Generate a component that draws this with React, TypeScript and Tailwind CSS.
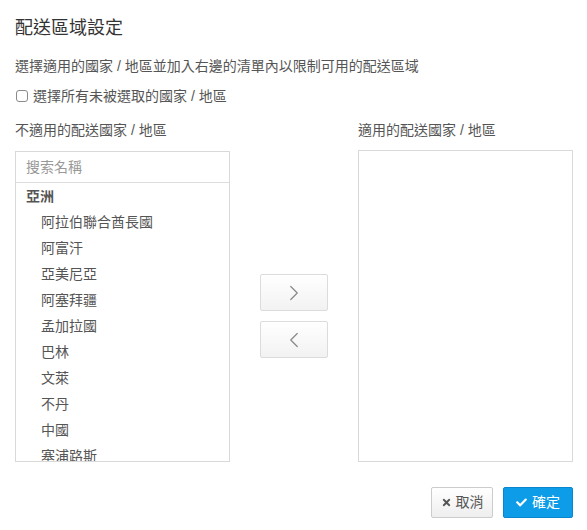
import React from "react";
import { ChevronRight, ChevronLeft } from "lucide-react";
import { FaCheck, FaTimes } from "react-icons/fa";

const items = [
  "阿拉伯聯合酋長國",
  "阿富汗",
  "亞美尼亞",
  "阿塞拜疆",
  "孟加拉國",
  "巴林",
  "文萊",
  "不丹",
  "中國",
  "塞浦路斯",
];

export default function App() {
  return (
    <div
      className="w-[587px] h-[530px] bg-white text-[#555] overflow-hidden"
      style={{ fontFamily: '"Helvetica Neue", "Liberation Sans", "Noto Sans CJK TC", sans-serif' }}
    >
      <div className="pl-[15px] pr-[14px] pt-[16px]">
        <h1 className="text-[18px] leading-[24px] text-[#333] font-normal">配送區域設定</h1>
        <p className="mt-[16px] text-[14px] leading-[20px] text-[#555]">
          選擇適用的國家 / 地區並加入右邊的清單內以限制可用的配送區域
        </p>
        <label className="mt-[10px] flex items-center h-[20px] text-[14px] leading-[20px] text-[#555]">
          <span className="w-[12px] h-[12px] border border-[#8a8a8a] rounded-[3px] bg-white mr-[5px] ml-[1px] box-border" />
          選擇所有未被選取的國家 / 地區
        </label>

        <div className="mt-[14px] flex">
          <div className="w-[215px] flex flex-col">
            <div className="text-[14px] leading-[20px] h-[20px] text-[#555]">不適用的配送國家 / 地區</div>
            <div className="mt-[11px] h-[311px] border border-[#d9d9d9] flex flex-col overflow-hidden">
              <div className="h-[31px] border-b border-[#ddd] flex items-center pl-[10px] text-[14px] text-[#999] shrink-0">
                搜索名稱
              </div>
              <div className="flex-1 overflow-hidden">
                <div className="pl-[10px] text-[14px] leading-[26px] font-bold text-[#555]">亞洲</div>
                {items.map((c) => (
                  <div key={c} className="pl-[25px] text-[14px] leading-[26px] text-[#555]">
                    {c}
                  </div>
                ))}
              </div>
            </div>
          </div>

          <div className="w-[128px] flex flex-col items-center pt-[154px] gap-[10px]">
            <button className="w-[68px] h-[37px] border border-[#dcdcdc] rounded-[2px] bg-gradient-to-b from-white to-[#f2f2f2] flex items-center justify-center">
              <ChevronRight size={26} strokeWidth={1.1} color="#888" />
            </button>
            <button className="w-[68px] h-[37px] border border-[#dcdcdc] rounded-[2px] bg-gradient-to-b from-white to-[#f2f2f2] flex items-center justify-center">
              <ChevronLeft size={26} strokeWidth={1.1} color="#888" />
            </button>
          </div>

          <div className="w-[215px] flex flex-col">
            <div className="text-[14px] leading-[20px] h-[20px] text-[#555]">適用的配送國家 / 地區</div>
            <div className="mt-[10px] h-[312px] border border-[#d9d9d9]" />
          </div>
        </div>

        <div className="mt-[25px] flex justify-end gap-[10px]">
          <button className="w-[62px] h-[31px] border border-[#ccc] rounded-[2px] bg-gradient-to-b from-white to-[#eee] flex items-center justify-center gap-[4px] text-[14px] text-[#555]">
            <FaTimes size={11} color="#555" />
            取消
          </button>
          <button className="w-[70px] h-[31px] border border-[#0a86cf] rounded-[2px] bg-[#0d9de8] flex items-center justify-center gap-[5px] text-[14px] text-white">
            <FaCheck size={11} color="#fff" />
            確定
          </button>
        </div>
      </div>
    </div>
  );
}
